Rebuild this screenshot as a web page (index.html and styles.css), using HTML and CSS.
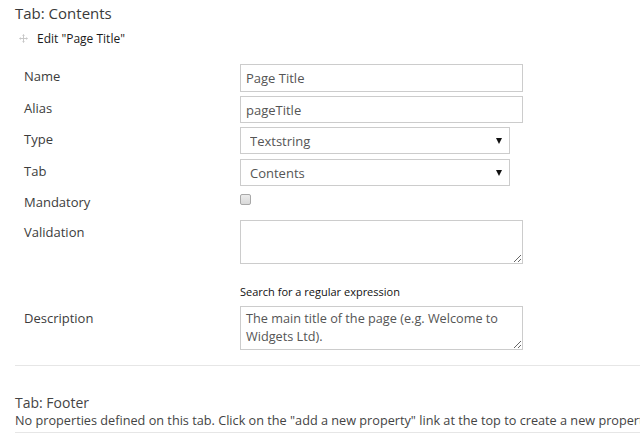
FILE: index.html
```html
<!DOCTYPE html>
<html>
<head>
<meta charset="utf-8">
<link rel="stylesheet" href="styles.css">
</head>
<body>
<div class="page">
  <h3 class="tab-title">Tab: Contents</h3>
  <div class="edit-line">
    <svg class="move-icon" width="9" height="9" viewBox="0 0 9 9">
      <path d="M4.5 0.5 L4.5 8.5 M0.5 4.5 L8.5 4.5" stroke="#c8c8c8" stroke-width="1" fill="none"/>
      <path d="M3 1.8 L4.5 0.3 L6 1.8 Z M3 7.2 L4.5 8.7 L6 7.2 Z M1.8 3 L0.3 4.5 L1.8 6 Z M7.2 3 L8.7 4.5 L7.2 6 Z" fill="#c8c8c8"/>
    </svg>
    <span>Edit "Page Title"</span>
  </div>

  <div class="form">
    <div class="row">
      <label class="label">Name</label>
      <div class="control"><input class="text-input name-input" type="text" value="Page Title"></div>
    </div>
    <div class="row">
      <label class="label">Alias</label>
      <div class="control"><input class="text-input" type="text" value="pageTitle"></div>
    </div>
    <div class="row row-type">
      <label class="label">Type</label>
      <div class="control">
        <div class="select-wrap">
          <select class="select"><option>Textstring</option></select>
          <span class="select-arrow"></span>
        </div>
      </div>
    </div>
    <div class="row">
      <label class="label">Tab</label>
      <div class="control">
        <div class="select-wrap">
          <select class="select"><option>Contents</option></select>
          <span class="select-arrow"></span>
        </div>
      </div>
    </div>
    <div class="row row-check">
      <label class="label">Mandatory</label>
      <div class="control"><input class="checkbox" type="checkbox"></div>
    </div>
    <div class="row">
      <label class="label">Validation</label>
      <div class="control">
        <textarea class="textarea"></textarea>
        <div class="help">Search for a regular expression</div>
      </div>
    </div>
    <div class="row">
      <label class="label">Description</label>
      <div class="control">
        <textarea class="textarea desc-text">The main title of the page (e.g. Welcome to Widgets Ltd).</textarea>
      </div>
    </div>
  </div>

  <div class="divider first-divider"></div>

  <h3 class="tab-title footer-title">Tab: Footer</h3>
  <p class="empty-note">No properties defined on this tab. Click on the "add a new property" link at the top to create a new property.</p>
  <div class="divider last-divider"></div>
</div>
</body>
</html>
```

FILE: styles.css
```css
html, body {
  margin: 0;
  padding: 0;
  background: #fff;
  overflow: hidden;
}

body {
  font-family: "Open Sans", "Liberation Sans", sans-serif;
  color: #333;
}

.page {
  width: 760px;
  padding-left: 15px;
}

.tab-title {
  margin: 0;
  padding-top: 3px;
  font-size: 15px;
  line-height: 20px;
  font-weight: 400;
  color: #3a3a3a;
}

.edit-line {
  margin-top: 8px;
  display: flex;
  align-items: center;
  font-size: 12px;
  line-height: 16px;
  color: #1a1a1a;
}

.move-icon {
  margin-left: 4px;
  margin-right: 9px;
  margin-top: -1px;
}

.form {
  margin-top: 17px;
  padding-left: 9px;
  display: flex;
  flex-direction: column;
  gap: 4px;
}

.row {
  display: grid;
  grid-template-columns: 216px 1fr;
  align-items: start;
}

.row-type {
  margin-bottom: 1px;
}

.label {
  padding-top: 3px;
  font-size: 13px;
  line-height: 18px;
  color: #3c3c3c;
}

.control {
  display: flex;
  flex-direction: column;
  align-items: flex-start;
}

.text-input {
  box-sizing: border-box;
  width: 283px;
  height: 27px;
  margin: 0;
  padding: 0 5px;
  border: 1px solid #cccccc;
  border-radius: 0;
  font-family: "Open Sans", "Liberation Sans", sans-serif;
  font-size: 13px;
  color: #555;
  background: #fff;
  outline: none;
}

.name-input {
  height: 28px;
}

.select-wrap {
  position: relative;
  width: 270px;
  height: 27px;
}

.select {
  -webkit-appearance: none;
  appearance: none;
  box-sizing: border-box;
  width: 270px;
  height: 27px;
  margin: 0;
  padding: 0 9px;
  border: 1px solid #cccccc;
  border-radius: 0;
  background: #fff;
  font-family: "Open Sans", "Liberation Sans", sans-serif;
  font-size: 13px;
  color: #555;
  outline: none;
}

.select-arrow {
  position: absolute;
  right: 8px;
  top: 11px;
  width: 0;
  height: 0;
  border-left: 3px solid transparent;
  border-right: 3px solid transparent;
  border-top: 6px solid #111;
  pointer-events: none;
}

.row-check {
  height: 26px;
}

.checkbox {
  -webkit-appearance: none;
  appearance: none;
  box-sizing: border-box;
  width: 11px;
  height: 11px;
  margin: 4px 0 0 0;
  border: 1px solid #a8a8a8;
  border-radius: 2px;
  background: linear-gradient(#ececec, #d9d9d9);
}

.textarea {
  box-sizing: border-box;
  width: 283px;
  height: 44px;
  margin: 0;
  padding: 2px 5px;
  border: 1px solid #cccccc;
  border-radius: 0;
  font-family: "Open Sans", "Liberation Sans", sans-serif;
  font-size: 13px;
  line-height: 18px;
  color: #555;
  resize: vertical;
  outline: none;
  overflow: hidden;
  display: block;
}

.desc-text {
  font-size: 12.7px;
}

.help {
  margin-top: 20px;
  margin-bottom: 3px;
  font-size: 11px;
  line-height: 15px;
  color: #111;
}

.divider {
  height: 1px;
  background: #e6e6e6;
}

.first-divider {
  margin-top: 15px;
}

.footer-title {
  margin-top: 27px;
  padding-top: 0;
  font-size: 14px;
  line-height: 19px;
  color: #444;
}

.empty-note {
  margin: 0;
  font-size: 12.7px;
  line-height: 16px;
  color: #444;
  white-space: nowrap;
}

.last-divider {
  margin-top: 4px;
}
```
